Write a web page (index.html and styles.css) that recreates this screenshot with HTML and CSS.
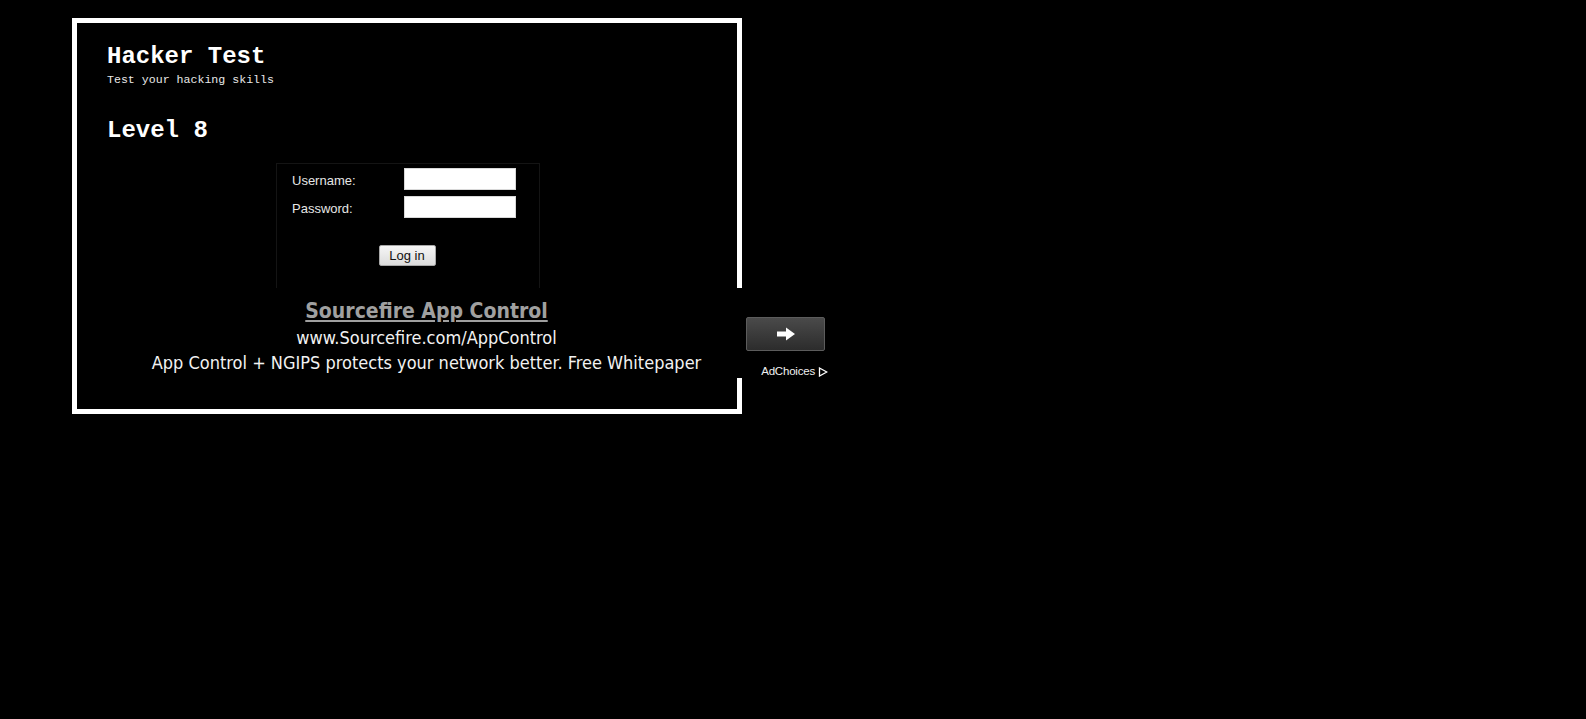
FILE: index.html
```html
<!DOCTYPE html>
<html>
<head>
<meta charset="utf-8">
<title>Hacker Test - Level 8</title>
<link rel="stylesheet" href="styles.css">
</head>
<body>
<div class="page">
  <div class="frame">
    <h1 class="title">Hacker Test</h1>
    <div class="subtitle">Test your hacking skills</div>
    <h2 class="level">Level 8</h2>
    <div class="login-box">
      <div class="row">
        <label class="label">Username:</label>
        <input class="field" type="text">
      </div>
      <div class="row">
        <label class="label">Password:</label>
        <input class="field" type="password">
      </div>
      <div class="actions">
        <button class="login-btn">Log in</button>
      </div>
    </div>
  </div>

  <div class="ad">
    <div class="ad-text">
      <a class="ad-title" href="#">Sourcefire App Control</a>
      <div class="ad-url">www.Sourcefire.com/AppControl</div>
      <div class="ad-desc">App Control + NGIPS protects your network better. Free Whitepaper</div>
    </div>
    <div class="ad-side">
      <div class="ad-go">
        <svg width="20" height="14" viewBox="0 0 20 14"><path d="M1 4.5 H10 V0.5 L19 7 L10 13.5 V9.5 H1 Z" fill="#fff"/></svg>
      </div>
      <div class="adchoices">AdChoices
        <svg width="10" height="10" viewBox="0 0 10 10"><path d="M1.5 1 L8.8 5 L1.5 9 Z" fill="none" stroke="#fff" stroke-width="1.3"/></svg>
      </div>
    </div>
  </div>
</div>
</body>
</html>
```

FILE: styles.css
```css
html, body {
  margin: 0;
  padding: 0;
  background: #000;
}

.page {
  position: relative;
  width: 1586px;
  height: 719px;
  padding: 18px 0 0 72px;
  box-sizing: border-box;
}

.frame {
  width: 670px;
  height: 396px;
  box-sizing: border-box;
  border: 5px solid #fff;
  background: #000;
  padding: 20px 0 0 30px;
  color: #fff;
  font-family: "Liberation Mono", "Courier New", monospace;
}

.title {
  margin: 0;
  font-size: 24px;
  line-height: 28px;
  font-weight: bold;
}

.subtitle {
  margin-top: 2px;
  font-size: 11.6px;
  line-height: 14px;
  color: #e8e8e8;
}

.level {
  margin: 30px 0 0 0;
  font-size: 24px;
  line-height: 28px;
  font-weight: bold;
}

.login-box {
  margin: 18px 0 0 169px;
  width: 264px;
  height: 140px;
  box-sizing: border-box;
  border: 1px solid #141414;
  padding: 4px 23px 0 15px;
  font-family: "Liberation Sans", Arial, sans-serif;
}

.row {
  display: flex;
  align-items: center;
  justify-content: space-between;
  margin-bottom: 6px;
}

.label {
  font-size: 13px;
  padding-top: 2px;
  color: #e6e6e6;
}

.field {
  width: 112px;
  height: 22px;
  box-sizing: border-box;
  border: 1px solid #d8d8d8;
  background: #fff;
  margin: 0;
  padding: 0;
}

.actions {
  display: flex;
  justify-content: center;
  padding-top: 21px;
  padding-left: 6px;
}

.login-btn {
  width: 57px;
  height: 21px;
  box-sizing: border-box;
  border: 1px solid #a8a8a8;
  border-radius: 2px;
  background: linear-gradient(#f6f6f6, #dcdcdc);
  font-family: "Liberation Sans", Arial, sans-serif;
  font-size: 13px;
  color: #111;
  padding: 0;
}

.ad {
  position: absolute;
  left: 102px;
  top: 288px;
  width: 728px;
  height: 90px;
  background: #000;
  display: flex;
}

.ad-text {
  width: 644px;
  padding: 10px 0 0 5px;
  box-sizing: border-box;
  display: flex;
  flex-direction: column;
  align-items: center;
  font-family: "DejaVu Sans", Tahoma, sans-serif;
  font-stretch: condensed;
  color: #f2f2f2;
}

.ad-title {
  font-size: 21px;
  line-height: 27px;
  font-weight: bold;
  color: #a0a0a0;
  text-decoration: underline;
}

.ad-url {
  font-size: 18px;
  line-height: 26px;
}

.ad-desc {
  font-size: 18px;
  line-height: 24px;
}

.ad-side {
  display: flex;
  flex-direction: column;
  align-items: flex-end;
  width: 84px;
  padding-top: 29px;
  box-sizing: border-box;
}

.ad-go {
  align-self: flex-start;
  width: 79px;
  height: 34px;
  box-sizing: border-box;
  border: 1px solid #5c5c5c;
  border-radius: 2px;
  background: linear-gradient(#4a4a4a, #2c2c2c);
  display: flex;
  align-items: center;
  justify-content: center;
}

.adchoices {
  margin-top: 14px;
  margin-right: 2px;
  display: flex;
  align-items: center;
  gap: 3px;
  font-family: "Liberation Sans", Arial, sans-serif;
  font-size: 11.5px;
  line-height: 13px;
  letter-spacing: -0.2px;
  color: #f0f0f0;
}
```
